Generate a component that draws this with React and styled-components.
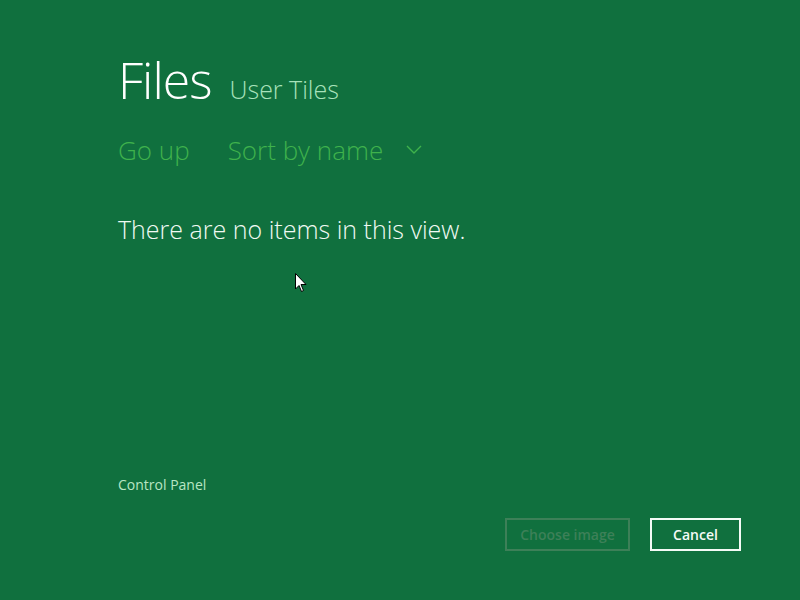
import React from "react";
import styled, { createGlobalStyle } from "styled-components";

const Global = createGlobalStyle`
  html, body {
    margin: 0;
    padding: 0;
    background: #10703e;
  }
  body {
    font-family: "Open Sans", "Noto Sans", sans-serif;
  }
`;

const Page = styled.div`
  position: relative;
  width: 800px;
  height: 600px;
  background: #10703e;
  color: #eef8f1;
  padding: 50px 59px 49px 118px;
  box-sizing: border-box;
  display: flex;
  flex-direction: column;
  overflow: hidden;
`;

const Header = styled.div`
  display: flex;
  align-items: baseline;
  gap: 18px;
`;

const Title = styled.h1`
  margin: 0;
  font-weight: 300;
  font-size: 50px;
  line-height: 60px;
  letter-spacing: -1px;
  color: #ffffff;
`;

const Subtitle = styled.span`
  font-weight: 300;
  font-size: 25px;
  color: #a8e2bb;
`;

const Toolbar = styled.div`
  display: flex;
  align-items: center;
  gap: 38px;
  margin-top: 22px;
`;

const Command = styled.span`
  font-weight: 300;
  font-size: 26px;
  color: #3fb24c;
  display: inline-flex;
  align-items: center;
  gap: 23px;
`;

const Empty = styled.p`
  margin: 44px 0 0;
  font-weight: 300;
  font-size: 25px;
  color: #f0faf3;
`;

const Spacer = styled.div`
  flex: 1;
`;

const Location = styled.div`
  font-size: 14px;
  color: #b8e6c4;
`;

const Footer = styled.div`
  display: flex;
  justify-content: flex-end;
  gap: 20px;
  margin-top: 24px;
`;

const Button = styled.button`
  font-family: "Open Sans", sans-serif;
  font-size: 14px;
  font-weight: 600;
  height: 33px;
  padding: 0;
  width: ${(p) => p.$w}px;
  background: transparent;
  border: 2px solid ${(p) => (p.$disabled ? "#3d8058" : "#f4fbf6")};
  color: ${(p) => (p.$disabled ? "#3d8058" : "#f4fbf6")};
`;

const Cursor = styled.svg`
  position: absolute;
  left: 295px;
  top: 273px;
`;

export default function App() {
  return (
    <>
      <Global />
      <Page>
        <Header>
          <Title>Files</Title>
          <Subtitle>User Tiles</Subtitle>
        </Header>
        <Toolbar>
          <Command>Go up</Command>
          <Command>
            Sort by name
            <svg width="16" height="10" viewBox="0 0 16 10">
              <path d="M1 1 L8 8 L15 1" fill="none" stroke="#3fb24c" strokeWidth="1.4" />
            </svg>
          </Command>
        </Toolbar>
        <Empty>There are no items in this view.</Empty>
        <Spacer />
        <Location>Control Panel</Location>
        <Footer>
          <Button $w={125} $disabled disabled>Choose image</Button>
          <Button $w={91}>Cancel</Button>
        </Footer>
        <Cursor width="12" height="20" viewBox="0 0 12 20">
          <path d="M0.5 0.5 L0.5 16 L4 12.5 L6.5 18.5 L8.5 17.5 L6 11.5 L11 11.5 Z" fill="#fff" stroke="#000" strokeWidth="1" />
        </Cursor>
      </Page>
    </>
  );
}
